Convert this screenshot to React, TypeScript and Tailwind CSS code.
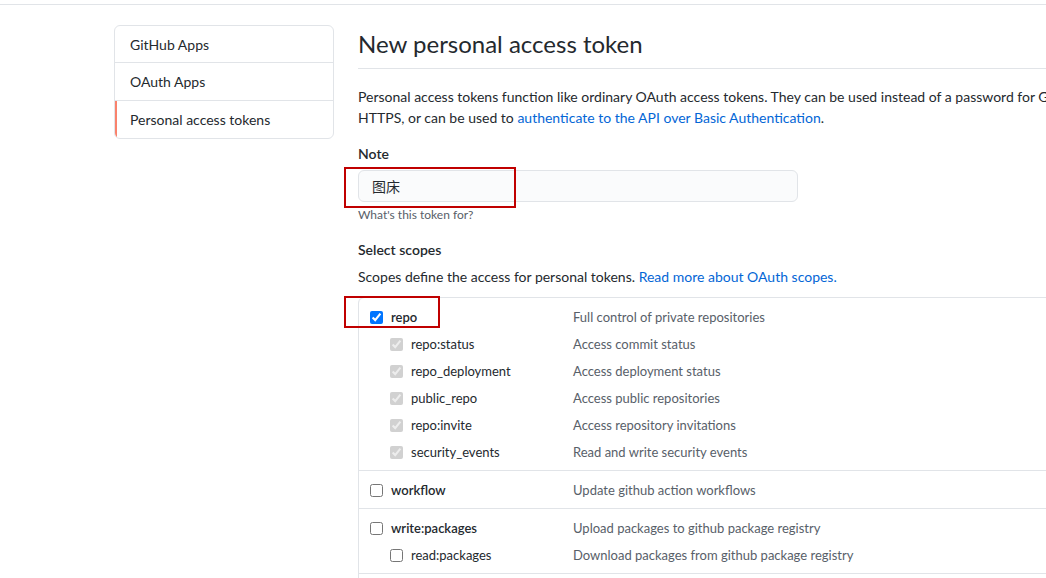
import React from "react";

const font = { fontFamily: '"Segoe UI", Lato, "Noto Sans CJK SC", sans-serif' };

type Scope = { name: string; desc: string; checked?: boolean; sub?: boolean; disabled?: boolean };

const groups: Scope[][] = [
  [
    { name: "repo", desc: "Full control of private repositories", checked: true },
    { name: "repo:status", desc: "Access commit status", sub: true, checked: true, disabled: true },
    { name: "repo_deployment", desc: "Access deployment status", sub: true, checked: true, disabled: true },
    { name: "public_repo", desc: "Access public repositories", sub: true, checked: true, disabled: true },
    { name: "repo:invite", desc: "Access repository invitations", sub: true, checked: true, disabled: true },
    { name: "security_events", desc: "Read and write security events", sub: true, checked: true, disabled: true },
  ],
  [{ name: "workflow", desc: "Update github action workflows" }],
  [
    { name: "write:packages", desc: "Upload packages to github package registry" },
    { name: "read:packages", desc: "Download packages from github package registry", sub: true },
  ],
];

function Row({ s }: { s: Scope }) {
  return (
    <div className="flex h-[27px] items-center">
      <div className={`flex w-[214px] shrink-0 items-center ${s.sub ? "pl-[31px]" : "pl-[11px]"}`}>
        <input
          type="checkbox"
          checked={!!s.checked}
          disabled={s.disabled}
          readOnly
          className="m-0 h-[13px] w-[13px]"
        />
        <span className={`ml-[8px] text-[13px] text-[#24292e] ${s.sub ? "font-normal" : "font-semibold"}`}>{s.name}</span>
      </div>
      <span className="text-[13px] text-[#586069]">{s.desc}</span>
    </div>
  );
}

export default function App() {
  return (
    <div className="relative h-[578px] w-[1046px] overflow-hidden bg-white text-[#24292e]" style={font}>
      <div className="h-[5px] border-b border-[#e1e4e8]" />
      <div className="flex pl-[114px] pt-[20px]">
        <div className="w-[220px] shrink-0">
          <div className="overflow-hidden rounded-[6px] border border-[#e1e4e8] text-[14px]">
            <div className="flex h-[37px] items-center border-b border-[#e1e4e8] pl-[15px]">GitHub Apps</div>
            <div className="flex h-[38px] items-center border-b border-[#e1e4e8] pl-[15px]">OAuth Apps</div>
            <div className="flex h-[37px] items-center border-l-2 border-[#f9826c] pl-[13px]">Personal access tokens</div>
          </div>
        </div>
        <div className="ml-[24px] w-[760px] shrink-0">
          <div className="border-b border-[#e1e4e8] pb-[6px] pt-[1px]">
            <h1 className="text-[24px] font-normal leading-[36px]">New personal access token</h1>
          </div>
          <p className="mt-[17px] text-[14px] leading-[21px]">
            <span className="block whitespace-nowrap">
              Personal access tokens function like ordinary OAuth access tokens. They can be used instead of a password for Git over
            </span>
            <span className="block whitespace-nowrap">
              HTTPS, or can be used to{" "}
              <span className="text-[#0366d6]">authenticate to the API over Basic Authentication</span>.
            </span>
          </p>
          <div className="mt-[15px] text-[14px] font-semibold leading-[21px]">Note</div>
          <div className="mt-[6px] flex h-[32px] w-[440px] items-center rounded-[6px] border border-[#e1e4e8] bg-[#fafbfc] pl-[13px] text-[14px]">
            图床
          </div>
          <div className="mt-[4px] text-[12px] leading-[18px] text-[#586069]">What's this token for?</div>
          <div className="mt-[15px] text-[14px] font-semibold leading-[21px]">Select scopes</div>
          <div className="mt-[6px] text-[14px] leading-[21px]">
            Scopes define the access for personal tokens.{" "}
            <span className="text-[#0366d6]">Read more about OAuth scopes.</span>
          </div>
          <div className="mt-[10px] rounded-tl-[6px] border-l border-[#e1e4e8]">
            {groups.map((g, i) => (
              <div key={i} className={`border-t border-[#e1e4e8] pb-[4px] pt-[6px] ${i === 0 ? "rounded-tl-[6px]" : ""}`}>
                {g.map((s) => (
                  <Row key={s.name} s={s} />
                ))}
              </div>
            ))}
            <div className="border-t border-[#e1e4e8] h-[10px]" />
          </div>
        </div>
      </div>
      <div className="pointer-events-none absolute left-[344px] top-[167px] h-[41px] w-[172px] border-2 border-[#c00000]" />
      <div className="pointer-events-none absolute left-[344px] top-[296px] h-[32px] w-[96px] border-2 border-[#c00000]" />
    </div>
  );
}
